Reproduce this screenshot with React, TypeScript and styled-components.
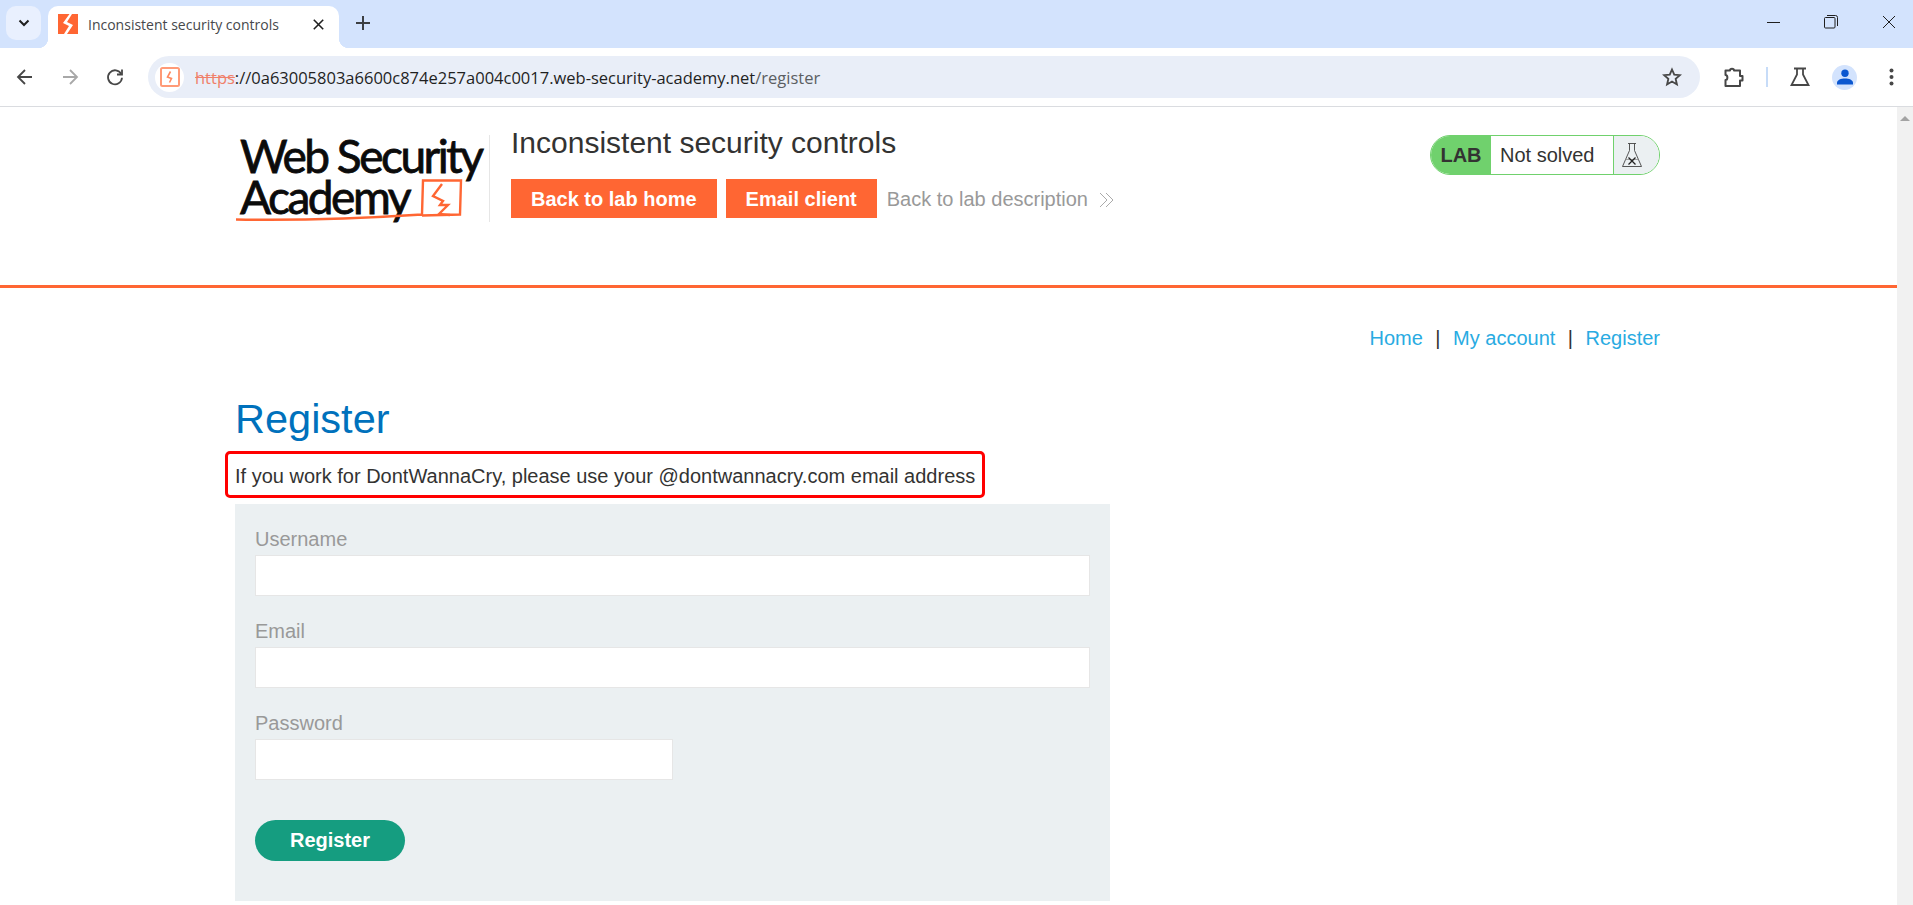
import React from 'react';
import styled, { createGlobalStyle } from 'styled-components';

const GlobalStyle = createGlobalStyle`
	html, body {
		margin: 0;
		padding: 0;
		background: #fff;
		overflow: hidden;
	}

	* {
		box-sizing: border-box;
	}
`;

const Window = styled.div`
	width: 1913px;
	height: 905px;
	display: flex;
	flex-direction: column;
	overflow: hidden;
	font-family: 'Liberation Sans', Arial, sans-serif;
	font-size: 20px;
	color: #333332;
`;

const TabStrip = styled.div`
	height: 48px;
	flex: none;
	display: flex;
	align-items: flex-end;
	padding-left: 6px;
	background: #d3e3fd;
`;

const TabSearch = styled.div`
	width: 35px;
	height: 34px;
	margin-bottom: 8px;
	display: flex;
	align-items: center;
	justify-content: center;
	border-radius: 10px;
	background: #e9f0fe;
`;

const Tab = styled.div`
	position: relative;
	width: 291px;
	height: 42px;
	margin-left: 7px;
	display: flex;
	align-items: center;
	padding: 0 15px 6px 10px;
	border-radius: 10px 10px 0 0;
	background: #fff;

	&::before,
	&::after {
		content: '';
		position: absolute;
		bottom: 0;
		width: 10px;
		height: 10px;
	}

	&::before {
		left: -10px;
		background: radial-gradient(circle at 0 0, transparent 10px, #fff 10.5px);
	}

	&::after {
		right: -10px;
		background: radial-gradient(circle at 100% 0, transparent 10px, #fff 10.5px);
	}
`;

const TabTitle = styled.span`
	flex: 1;
	margin-left: 10px;
	font-family: 'Open Sans', sans-serif;
	font-size: 14px;
	white-space: nowrap;
	color: #46484b;
`;

const NewTab = styled.div`
	margin: 0 0 15px 12px;
	height: 20px;
	display: flex;
	align-items: center;
	width: 24px;
	justify-content: center;
`;

const WindowControls = styled.div`
	margin-left: auto;
	height: 44px;
	align-self: flex-start;
	display: flex;
	align-items: center;
	gap: 44px;
	padding-right: 17px;
`;

const Toolbar = styled.div`
	height: 59px;
	flex: none;
	display: flex;
	align-items: center;
	padding: 0 0 0 13px;
	border-bottom: 1px solid #dadce0;
	border-radius: 10px 10px 0 0;
	background: #fff;
`;

const NavIcons = styled.div`
	width: 135px;
	display: flex;
	gap: 21px;
`;

const UrlBar = styled.div`
	width: 1552px;
	height: 42px;
	display: flex;
	align-items: center;
	padding: 0 18px 0 7px;
	border-radius: 21px;
	background: #e9eef8;
`;

const SiteBadge = styled.div`
	width: 29px;
	height: 29px;
	flex: none;
	display: flex;
	align-items: center;
	justify-content: center;
	border-radius: 50%;
	background: #fff;
`;

const Url = styled.div`
	flex: 1;
	margin-left: 11px;
	font-family: 'Open Sans', sans-serif;
	font-size: 16.5px;
	white-space: nowrap;
	color: #1f1f1f;
`;

const UrlScheme = styled.span`
	color: #f0806a;
	text-decoration: line-through;
`;

const UrlPath = styled.span`
	color: #5b5e62;
`;

const ToolIcons = styled.div`
	margin-left: 23px;
	display: flex;
	align-items: center;
`;

const ToolDivider = styled.div`
	width: 2px;
	height: 20px;
	margin: 0 22px 0 21px;
	background: #c7dcf8;
`;

const Avatar = styled.div`
	width: 25px;
	height: 25px;
	margin: 0 32px 0 22px;
	display: flex;
	align-items: center;
	justify-content: center;
	border-radius: 50%;
	background: #d3e3fd;
`;

const Viewport = styled.div`
	flex: 1;
	display: flex;
	min-height: 0;
`;

const Page = styled.div`
	flex: 1;
	min-width: 0;
`;

const Scrollbar = styled.div`
	width: 16px;
	flex: none;
	padding-top: 9px;
	display: flex;
	justify-content: center;
	background: #f1f1f1;
`;

const ScrollArrow = styled.div`
	width: 0;
	height: 0;
	border-left: 5px solid transparent;
	border-right: 5px solid transparent;
	border-bottom: 5px solid #a3a3a3;
`;

const LabHeader = styled.header`
	height: 181px;
	border-bottom: 3px solid #ff6633;
`;

const Container = styled.div`
	width: 1425px;
	margin-left: 235px;
`;

const HeaderRow = styled(Container)`
	display: flex;
	align-items: flex-start;
	padding-top: 16px;
`;

const Logo = styled.div`
	position: relative;
	width: 255px;
	height: 87px;
	margin-top: 12px;
	flex: none;
	padding-left: 5px;
	border-right: 1px solid #e6e6e6;
	font-family: Lato, sans-serif;
	font-weight: 400;
	font-size: 46px;
	line-height: 41px;
	letter-spacing: -2.5px;
	-webkit-text-stroke: 0.8px #0b0b0b;
	color: #0b0b0b;
`;

const LogoLine = styled.div`
	white-space: nowrap;
`;

const LogoMark = styled.svg`
	position: absolute;
	left: 0;
	top: 0;
`;

const HeaderInfo = styled.div`
	margin-left: 21px;
	flex: none;
`;

const LabTitle = styled.div`
	height: 40px;
	font-size: 30px;
	line-height: 40px;
	margin-bottom: 16px;
`;

const HeaderActions = styled.div`
	display: flex;
	align-items: center;
	gap: 9px;
`;

const OrangeButton = styled.a`
	height: 39px;
	display: flex;
	align-items: center;
	padding: 2px 20px 0;
	font-weight: 700;
	color: #fff;
	background: #ff6633;
`;

const BackLink = styled.a`
	display: flex;
	align-items: center;
	gap: 11px;
	margin-left: 1px;
	padding-top: 2px;
	color: #999;
`;

const StatusBadge = styled.div`
	margin-left: auto;
	margin-top: 12px;
	width: 230px;
	height: 40px;
	display: flex;
	overflow: hidden;
	border: 1px solid #70d16d;
	border-radius: 20px;
`;

const StatusLab = styled.div`
	width: 60px;
	display: flex;
	align-items: center;
	justify-content: center;
	font-weight: 700;
	background: #70d16d;
`;

const StatusText = styled.div`
	flex: 1;
	display: flex;
	align-items: center;
	padding-left: 9px;
	border-right: 1px solid #70d16d;
`;

const StatusIcon = styled.div`
	width: 45px;
	display: flex;
	align-items: center;
	padding-left: 7px;
	background: #ebf0f2;
`;

const TopLinks = styled.nav`
	margin-top: 38px;
	height: 24px;
	display: flex;
	justify-content: flex-end;
	align-items: center;
	line-height: 24px;
`;

const TopLink = styled.a`
	color: #29abe2;
`;

const TopSeparator = styled.span`
	margin: 0 12.5px;
`;

const Heading = styled.h1`
	margin: 45px 0 8px;
	font-size: 41.5px;
	font-weight: 400;
	line-height: 48px;
	color: #0071bc;
`;

const Notice = styled.p`
	width: fit-content;
	height: 47px;
	margin: 0 0 6px -10px;
	padding: 4px 7px 0;
	display: flex;
	align-items: center;
	border: 3px solid #ff0000;
	border-radius: 5px;
`;

const FormPanel = styled.form`
	width: 875px;
	height: 397px;
	padding: 23px 20px 40px;
	background: #ebf0f2;
`;

const Label = styled.label`
	display: block;
	height: 24px;
	margin-bottom: 4px;
	line-height: 24px;
	color: #999;
`;

const TextInput = styled.input<{ $narrow?: boolean }>`
	display: block;
	width: ${(p) => (p.$narrow ? '418px' : '100%')};
	height: 41px;
	margin-bottom: 23px;
	border: 1px solid #e6e6e6;
	outline: none;
	background: #fff;
`;

const SubmitButton = styled.button`
	display: block;
	width: 150px;
	height: 41px;
	margin-top: 40px;
	padding: 0;
	border: none;
	border-radius: 21px;
	font-family: inherit;
	font-size: 20px;
	font-weight: 700;
	color: #fff;
	background: #159d80;
`;

function Chevron() {
	return (
		<svg width="12" height="8" viewBox="0 0 12 8" fill="none" stroke="#1f1f1f" strokeWidth="2">
			<path d="M1.5 1.5 6 6l4.5-4.5" />
		</svg>
	);
}

function Favicon() {
	return (
		<svg width="20" height="20" viewBox="0 0 20 20">
			<rect width="20" height="20" fill="#ff6633" />
			<path d="M11.5 0 5 9l6 3-5 8h3l6-9-6-3 5-8z" fill="#fff" />
		</svg>
	);
}

function SiteIcon() {
	return (
		<svg width="20" height="20" viewBox="0 0 20 20" fill="none">
			<rect x="1" y="1" width="18" height="18" rx="1.5" stroke="#ff9a77" strokeWidth="2" />
			<path d="M10.5 4.5 7.5 10l4 1.5-2 4" stroke="#ff8a60" strokeWidth="1.6" />
		</svg>
	);
}

function Close({ size, color, width }: { size: number; color: string; width: number }) {
	return (
		<svg width={size} height={size} viewBox="0 0 14 14" fill="none" stroke={color} strokeWidth={width}>
			<path d="M1 1l12 12M13 1 1 13" />
		</svg>
	);
}

function LabFlask() {
	return (
		<svg width="22" height="26" viewBox="0 0 22 26" fill="none" stroke="#444" strokeWidth="0.9">
			<path d="M7 1.5h8M8.5 1.5v7L1.5 24.5h19l-7-16v-7" />
			<path d="M4.5 17.5h13" stroke="#999" />
			<path d="M7.5 15.5l7 7M14.5 15.5l-7 7" strokeWidth="1.3" stroke="#222" />
		</svg>
	);
}

export default function App(): React.ReactElement {
	return (
		<Window>
			<GlobalStyle />
			<TabStrip>
				<TabSearch>
					<Chevron />
				</TabSearch>
				<Tab>
					<Favicon />
					<TabTitle>Inconsistent security controls</TabTitle>
					<Close size={11} color="#1f1f1f" width={2} />
				</Tab>
				<NewTab>
					<svg width="14" height="14" viewBox="0 0 14 14" stroke="#3c3f43" strokeWidth="2">
						<path d="M7 0v14M0 7h14" />
					</svg>
				</NewTab>
				<WindowControls>
					<svg width="13" height="13" viewBox="0 0 13 13" stroke="#1f1f1f" strokeWidth="1">
						<path d="M0 6.5h13" />
					</svg>
					<svg width="14" height="14" viewBox="0 0 14 14" fill="none" stroke="#1f1f1f" strokeWidth="1">
						<rect x="0.5" y="2.5" width="10.5" height="10.5" rx="1" />
						<path d="M3 .5h8.5A2 2 0 0 1 13.5 2.5V11" />
					</svg>
					<Close size={14} color="#1f1f1f" width={1} />
				</WindowControls>
			</TabStrip>
			<Toolbar>
				<NavIcons>
					<svg width="24" height="24" viewBox="0 0 24 24" fill="none" stroke="#474747" strokeWidth="1.8">
						<path d="M19 12H5M12 5l-7 7 7 7" />
					</svg>
					<svg width="24" height="24" viewBox="0 0 24 24" fill="none" stroke="#a8a8a8" strokeWidth="1.8">
						<path d="M5 12h14M12 5l7 7-7 7" />
					</svg>
					<svg width="24" height="24" viewBox="0 0 24 24" fill="none" stroke="#474747" strokeWidth="1.8">
						<path d="M18.2 9A7 7 0 1 0 19 12.8" />
						<path d="M19 4.5V9.5H14" />
					</svg>
				</NavIcons>
				<UrlBar>
					<SiteBadge>
						<SiteIcon />
					</SiteBadge>
					<Url>
						<UrlScheme>https</UrlScheme>
						://0a63005803a6600c874e257a004c0017.web-security-academy.net
						<UrlPath>/register</UrlPath>
					</Url>
					<svg width="20" height="20" viewBox="0 0 24 24" fill="none" stroke="#474747" strokeWidth="2.2">
						<path d="m12 3 2.7 6.2 6.8.6-5.1 4.5 1.5 6.7-5.9-3.5-5.9 3.5 1.5-6.7-5.1-4.5 6.8-.6z" />
					</svg>
				</UrlBar>
				<ToolIcons>
					<svg width="22" height="22" viewBox="0 0 22 22" fill="none" stroke="#474747" strokeWidth="2" strokeLinejoin="round">
						<path d="M4 20h13v-5.5h2.5V10H17V4.5h-6C11 2 7 2 7 4.5H2.5V9C5 9 5 14 2.5 14v6z" />
					</svg>
					<ToolDivider />
					<svg width="20" height="20" viewBox="0 0 20 20" fill="none" stroke="#474747" strokeWidth="1.8">
						<path d="M4 1.5h12M7 1.5v6L1.5 18h17L13 7.5v-6" />
					</svg>
					<Avatar>
						<svg width="16" height="16" viewBox="0 0 16 16" fill="#0b57d0">
							<circle cx="8" cy="4.2" r="3.7" />
							<path d="M0 15.5v-1.8C0 11 4 9.5 8 9.5s8 1.5 8 4.2v1.8z" />
						</svg>
					</Avatar>
					<svg width="5" height="18" viewBox="0 0 5 18" fill="#474747">
						<circle cx="2.5" cy="2.5" r="2" />
						<circle cx="2.5" cy="9" r="2" />
						<circle cx="2.5" cy="15.5" r="2" />
					</svg>
				</ToolIcons>
			</Toolbar>
			<Viewport>
				<Page>
					<LabHeader>
						<HeaderRow>
							<Logo>
								<LogoLine>Web Security</LogoLine>
								<LogoLine>Academy</LogoLine>
								<LogoMark width="255" height="92" viewBox="0 0 255 92" fill="none" stroke="#ff6633">
									<path d="M1 84.5c60 1 125-1 186-5l1-34h38l-1 34-38 1" strokeWidth="2.4" />
									<path d="M207 49l-9 12 10 5-3 4h8l-9 9 11 1" strokeWidth="2.4" />
								</LogoMark>
							</Logo>
							<HeaderInfo>
								<LabTitle>Inconsistent security controls</LabTitle>
								<HeaderActions>
									<OrangeButton>Back to lab home</OrangeButton>
									<OrangeButton>Email client</OrangeButton>
									<BackLink>
										Back to lab description
										<svg width="15" height="16" viewBox="0 0 15 16" fill="none" stroke="#aaa">
											<path d="M1 1l7 7-7 7M7 1l7 7-7 7" />
										</svg>
									</BackLink>
								</HeaderActions>
							</HeaderInfo>
							<StatusBadge>
								<StatusLab>LAB</StatusLab>
								<StatusText>Not solved</StatusText>
								<StatusIcon>
									<LabFlask />
								</StatusIcon>
							</StatusBadge>
						</HeaderRow>
					</LabHeader>
					<Container>
						<TopLinks>
							<TopLink>Home</TopLink>
							<TopSeparator>|</TopSeparator>
							<TopLink>My account</TopLink>
							<TopSeparator>|</TopSeparator>
							<TopLink>Register</TopLink>
						</TopLinks>
						<Heading>Register</Heading>
						<Notice>If you work for DontWannaCry, please use your @dontwannacry.com email address</Notice>
						<FormPanel>
							<Label>Username</Label>
							<TextInput />
							<Label>Email</Label>
							<TextInput />
							<Label>Password</Label>
							<TextInput $narrow />
							<SubmitButton type="button">Register</SubmitButton>
						</FormPanel>
					</Container>
				</Page>
				<Scrollbar>
					<ScrollArrow />
				</Scrollbar>
			</Viewport>
		</Window>
	);
}
